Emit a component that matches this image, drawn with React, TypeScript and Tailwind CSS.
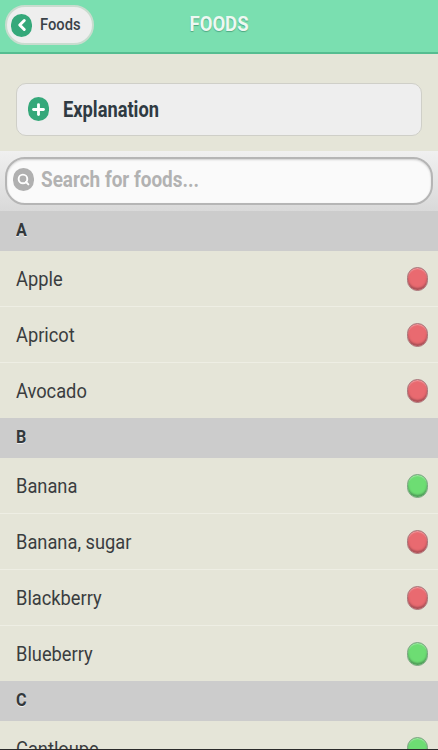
import { ChevronLeft, Plus, Search } from "lucide-react";

type Food = { name: string; ok: boolean };

const GROUPS: { letter: string; foods: Food[] }[] = [
  {
    letter: "A",
    foods: [
      { name: "Apple", ok: false },
      { name: "Apricot", ok: false },
      { name: "Avocado", ok: false },
    ],
  },
  {
    letter: "B",
    foods: [
      { name: "Banana", ok: true },
      { name: "Banana, sugar", ok: false },
      { name: "Blackberry", ok: false },
      { name: "Blueberry", ok: true },
    ],
  },
  {
    letter: "C",
    foods: [{ name: "Cantloupe", ok: true }],
  },
];

function Dot({ ok }: { ok: boolean }) {
  return (
    <span
      className={`h-[24px] w-[21px] shrink-0 rounded-full border ${
        ok
          ? "border-[#7fa585] bg-[#6ddd73] shadow-[inset_0_-2px_2px_#4f9a58,inset_0_1px_1px_#a5e8a8]"
          : "border-[#a87a7e] bg-[#e96a70] shadow-[inset_0_-2px_2px_#a84f55,inset_0_1px_1px_#f0a0a4]"
      }`}
    />
  );
}

function Row({ food, last }: { food: Food; last: boolean }) {
  return (
    <div
      className={`flex items-center justify-between pl-[16px] pr-[10px] ${
        last ? "h-[55px]" : "h-[56px] border-b border-[#eeeee4]"
      }`}
    >
      <span className="origin-left translate-y-[1px] scale-x-[0.87] text-[21px] leading-none text-[#3a3d3f]">{food.name}</span>
      <Dot ok={food.ok} />
    </div>
  );
}

export default function App() {
  return (
    <div className="h-[750px] overflow-hidden border-b border-[#2a2a2a] bg-[#e5e5d8] font-['Roboto',sans-serif]">
      <header className="relative flex h-[54px] items-center border-b-2 border-[#55bd90] bg-[#7adfb0] pb-[2px] pl-[5px]">
        <button
          type="button"
          className="flex h-[40px] w-[89px] items-center gap-[8px] rounded-[20px] border-2 border-[#c9dccf] bg-[#eeeeee] pl-[4px]"
        >
          <span className="flex h-[23px] w-[21px] items-center justify-center rounded-full bg-[#35a87a]">
            <ChevronLeft size={18} strokeWidth={4} className="text-white" />
          </span>
          <span className="origin-left scale-x-[0.92] text-[16px] font-medium text-[#3a4248]">Foods</span>
        </button>
        <h1 className="absolute inset-x-0 scale-x-[0.88] text-center text-[21px] font-bold text-[#eef8f2] [text-shadow:0_1px_1px_#4fa882]">
          FOODS
        </h1>
      </header>

      <section className="flex h-[97px] items-center px-[16px] pt-[13px]">
        <div className="flex h-[53px] w-full items-center gap-[14px] rounded-[10px] border border-[#cfcfc8] bg-[#eeeeee] pl-[11px]">
          <span className="flex h-[24px] w-[21px] items-center justify-center rounded-full bg-[#35a87a]">
            <Plus size={17} strokeWidth={4} className="text-white" />
          </span>
          <span className="origin-left translate-y-[1px] scale-x-[0.83] text-[22px] font-bold leading-none text-[#2f3a42]">Explanation</span>
        </div>
      </section>

      <div className="flex h-[60px] items-center bg-gradient-to-b from-[#f0f0f0] to-[#d9d9d9] px-[5px]">
        <div className="flex h-[48px] w-full items-center gap-[7px] rounded-[20px] border-2 border-[#b5b5b5] bg-[#fafafa] pb-[3px] pl-[6px] shadow-[inset_0_1px_2px_#d0d0d0]">
          <span className="flex h-[23px] w-[21px] items-center justify-center rounded-full bg-[#b0b0b0]">
            <Search size={13} strokeWidth={3.5} className="text-white" />
          </span>
          <span className="origin-left scale-x-[0.86] text-[22px] font-bold leading-none text-[#b2b2b2]">Search for foods...</span>
        </div>
      </div>

      {GROUPS.map((group) => (
        <div key={group.letter}>
          <div className="flex h-[40px] items-center bg-[#cccccc] pb-[1px] pl-[16px] text-[19px] font-bold text-[#33383b] [text-shadow:0_1px_0_#eeeeee]">
            <span className="origin-left scale-x-[0.85]">{group.letter}</span>
          </div>
          {group.foods.map((food, i) => (
            <Row key={food.name} food={food} last={i === group.foods.length - 1} />
          ))}
        </div>
      ))}
    </div>
  );
}
